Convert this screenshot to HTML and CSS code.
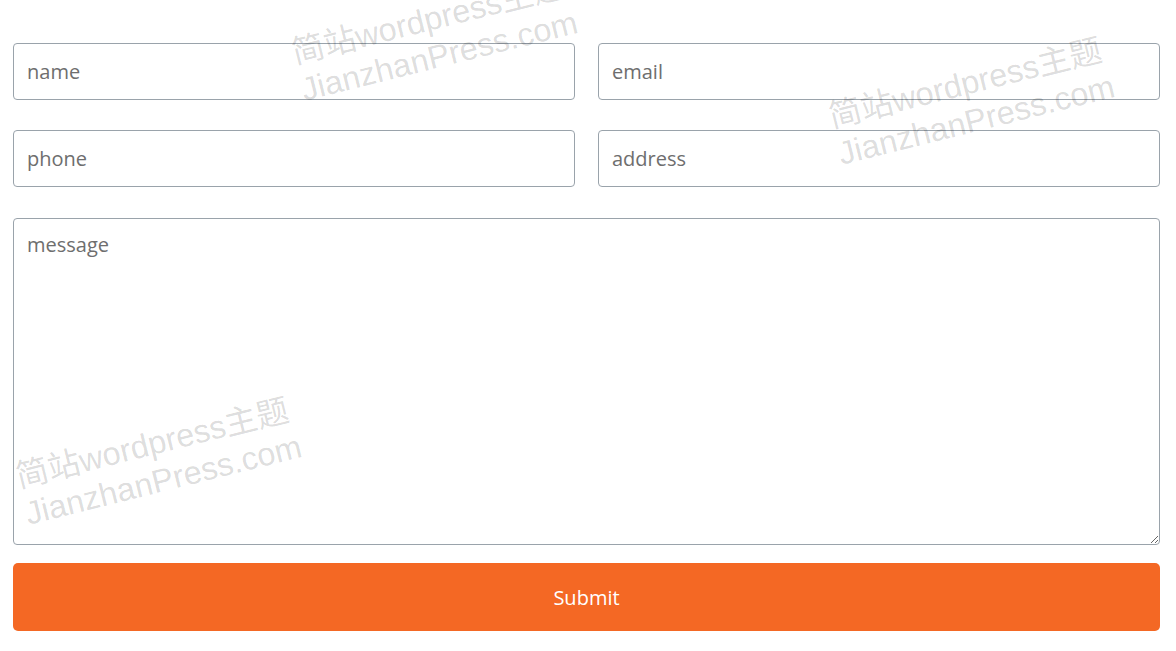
FILE: index.html
```html
<!DOCTYPE html>
<html lang="en">
<head>
<meta charset="utf-8">
<title>Contact form</title>
<link rel="stylesheet" href="styles.css">
</head>
<body>
<form class="form">
  <div class="grid">
    <input class="field" type="text" placeholder="name">
    <input class="field" type="email" placeholder="email">
    <input class="field" type="text" placeholder="phone">
    <input class="field" type="text" placeholder="address">
  </div>
  <textarea class="field message" placeholder="message"></textarea>
  <button class="submit" type="button">Submit</button>
</form>
<div class="wm wm1"><span>简站wordpress主题</span><span>JianzhanPress.com</span></div>
<div class="wm wm2"><span>简站wordpress主题</span><span>JianzhanPress.com</span></div>
<div class="wm wm3"><span>简站wordpress主题</span><span>JianzhanPress.com</span></div>
</body>
</html>
```
FILE: styles.css
```css
html, body {
  margin: 0;
  padding: 0;
  background: #fff;
}
body {
  position: relative;
  width: 1176px;
  height: 651px;
  overflow: hidden;
  font-family: "Open Sans", "Noto Sans", sans-serif;
}
.form {
  padding: 43px 16px 0 13px;
  display: flex;
  flex-direction: column;
}
.grid {
  display: grid;
  grid-template-columns: 1fr 1fr;
  column-gap: 23px;
  row-gap: 30px;
}
.field {
  box-sizing: border-box;
  height: 57px;
  border: 1px solid #9aa3ab;
  border-radius: 4px;
  padding: 0 13px;
  font-family: "Open Sans", "Noto Sans", sans-serif;
  font-size: 20px;
  color: #333;
  background: #fff;
  outline: none;
  width: 100%;
}
.field::placeholder {
  color: #6e6e6e;
  opacity: 1;
}
.message {
  margin-top: 31px;
  height: 327px;
  padding: 12px 13px;
  resize: vertical;
  display: block;
}
.submit {
  margin-top: 18px;
  height: 68px;
  border: none;
  border-radius: 5px;
  background: #f46824;
  color: #fff;
  font-family: "Open Sans", "Noto Sans", sans-serif;
  font-size: 20px;
  cursor: pointer;
}
.wm {
  position: absolute;
  display: flex;
  flex-direction: column;
  align-items: flex-start;
  font-family: "Liberation Sans", "Noto Sans CJK SC", sans-serif;
  font-size: 32.5px;
  line-height: 38px;
  color: rgba(0, 0, 0, 0.15);
  transform: rotate(-14deg);
  transform-origin: left top;
  pointer-events: none;
  white-space: nowrap;
}
.wm span:last-child {
  margin-left: 0;
}
.wm1 { left: 288px; top: 35px; }
.wm2 { left: 825px; top: 99px; }
.wm3 { left: 12px; top: 459px; }
```
